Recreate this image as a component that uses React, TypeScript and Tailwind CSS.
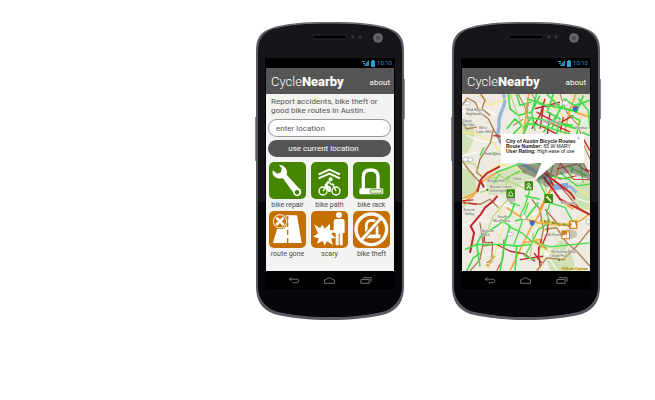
import type { ReactNode } from "react";

const FONT = "font-['Roboto','Liberation_Sans',sans-serif]";

type Road = { c: string; w: number; d: string };

const GREEN = "#43dc4b";
const RED = "#c0282c";
const BROWN = "#ad7d4e";
const ORANGE = "#f5a83c";
const YELLOW = "#f5e98c";
const OLIVE = "#a9d465";

// Minor streets first, then arterials, then rated bicycle routes.
const roads: Road[] = [
  { c: "#ffffff", w: 3, d: "M6 60L60 40L110 70M20 130L70 150L120 140M6 400L60 380L140 400L230 360M40 500L120 470L210 500L300 470M250 420L390 380M300 500L340 440L390 450M60 350L110 330L170 350M6 190L50 180M290 300L390 330M250 470L290 530" },
  { c: "#dcd6c8", w: 1.5, d: "M140 340L190 420M150 400L240 330M110 420L170 500M250 360L300 460M30 430L90 500M310 260L390 290M300 350L350 420M20 350L80 410M270 400L380 480M60 210L110 260M20 60L50 110" },
  { c: YELLOW, w: 4, d: "M55 6L90 40L125 25L170 6M6 120L50 125L100 150L120 180M60 250L120 215L190 235M80 534L105 480L130 400L120 340M230 440L270 480L330 500M240 534L250 480L225 430M330 230L350 290L390 310M380 60L350 90L390 120" },
  { c: YELLOW, w: 4, d: "M160 140L200 100L250 60L300 6M240 20L300 60L340 120M290 400L350 380L390 340M190 330L230 400L290 430" },
  { c: BROWN, w: 4, d: "M6 40L22 18L45 30L60 62L85 80L100 110L92 150L60 200L50 240L70 255M62 6L75 24L66 50L90 70M100 110L128 160M6 90L20 110L50 105M6 205L28 235L60 270" },
  { c: BROWN, w: 3, d: "M175 6L195 45L205 85L190 120M215 6L230 30L260 45L300 36M300 6L320 60L355 100L372 160L390 200M370 210L390 250M160 100L190 80" },
  { c: BROWN, w: 4, d: "M230 534L260 495L310 500L350 460L390 410M255 410L290 405L320 450L350 475L390 520M215 320L240 350L250 410L232 500M6 330L60 335L90 320L115 345M60 390L70 460L95 455M30 534L60 500L75 420" },
  { c: ORANGE, w: 5, d: "M348 6L330 50L318 100L312 170L290 250L262 310L235 370L215 400L190 450L150 534" },
  { c: ORANGE, w: 5, d: "M6 330L40 310L62 270L120 235M140 345L185 375L240 392L310 398L360 385L390 362M206 6L200 60L190 126M6 318L50 300M190 450L240 440M310 330L340 350M345 60L390 75" },
  { c: "#e8a23a", w: 6, d: "M275 290L255 320L238 355" },
  { c: RED, w: 6, d: "M120 222L80 243L62 262L52 298M60 262L72 285M250 255L275 285L300 320L390 366M345 320L330 300L250 240M30 480L42 420L32 400L62 365L75 345L100 325L112 310" },
  { c: RED, w: 4, d: "M110 455L150 475L190 482L225 505M180 500L250 490M245 438L235 470L240 520M222 480L245 510M100 130L122 132M10 330L50 335M265 380L262 420L245 460M6 325L40 322" },
  { c: RED, w: 4, d: "M215 110L240 70L255 20M230 60L295 95L340 70M250 45L240 110M220 90L290 125M270 60L262 126M310 75L300 120M255 85L330 120M225 50L300 30M370 140L390 175M280 280L250 215L240 240M375 230L390 236" },
  { c: "#c33a3a", w: 3, d: "M70 410L75 450L98 448L95 500L80 510M132 440L128 500L110 534M255 350L300 400M240 230L300 260L350 250M300 212L340 260L390 262M290 230L350 215L385 240M300 280L360 350" },
  { c: GREEN, w: 5, d: "M145 6L150 50L175 70L215 60L240 10M170 6L180 40L215 30M140 110L165 80L185 100L160 125M190 126L205 95L250 100M230 6L215 60L225 115M260 6L300 45L350 60L370 10M280 6L262 60L300 80L290 126" },
  { c: GREEN, w: 5, d: "M310 20L345 40L390 25M330 70L360 85L350 126M355 20L385 55L390 110M300 50L275 110M320 20L290 70L250 120M200 75L260 85L340 100M235 35L340 55M200 20L250 35M365 120L390 130M215 75L190 110M245 100L330 126M300 95L350 110" },
  { c: GREEN, w: 4, d: "M108 240L150 225L200 205L240 215M120 245L100 270L130 262L180 235M210 290L195 340L180 370M245 215L235 265L270 330L260 360M205 330L175 420L160 460M145 400L185 420L215 445L270 462L390 450" },
  { c: GREEN, w: 5, d: "M50 455L62 430L110 400L150 370L165 330M15 470L50 455L90 455L130 455L170 460L210 455M120 380L150 400L135 450L120 534M170 460L165 534M50 455L60 520M20 534L40 495L62 480M195 310L240 320M165 385L200 375L235 330" },
  { c: GREEN, w: 4, d: "M270 330L315 345L340 390M260 360L270 390L235 410L195 490L225 500M320 220L380 250M300 240L350 280L390 275M340 215L330 260M280 215L270 250L320 260M360 212L370 270M180 340L150 330M72 165L60 190M85 185L110 180" },
  { c: OLIVE, w: 3, d: "M90 260L120 250L165 275L200 290M60 300L95 290L130 300M150 6L190 110M240 212L260 300M80 420L100 370L160 300M130 300L150 250L200 235M6 345L30 325M220 420L210 500M16 210L45 215L55 240" },
];

const places: { x: number; y: number; t: string }[] = [
  { x: 18, y: 58, t: "Wild Basin" },
  { x: 18, y: 70, t: "Highlands" },
  { x: 8, y: 89, t: "Davis" },
  { x: 8, y: 101, t: "de Oak" },
  { x: 56, y: 109, t: "West" },
  { x: 48, y: 121, t: "Lake Hills" },
  { x: 73, y: 187, t: "Rollingwood" },
  { x: 82, y: 269, t: "Barton Hills" },
  { x: 90, y: 286, t: "Barton Creek" },
  { x: 90, y: 298, t: "Greenbelt" },
  { x: 160, y: 262, t: "Zilker" },
  { x: 112, y: 377, t: "South" },
  { x: 100, y: 389, t: "Manchaca" },
  { x: 10, y: 356, t: "Sunset" },
  { x: 14, y: 368, t: "Valley" },
  { x: 60, y: 418, t: "Garrison" },
  { x: 66, y: 430, t: "Park" },
  { x: 262, y: 431, t: "McKinney" },
  { x: 274, y: 480, t: "McKinney Falls" },
  { x: 274, y: 491, t: "State Park" },
  { x: 344, y: 111, t: "Windsor" },
  { x: 302, y: 334, t: "Riverside" },
  { x: 250, y: 93, t: "Hyde Park" },
];

const tagWrench = "M5 4l4 1 1 4 10 11-3 3L7 12l-4-1-1-4 3 2 2-2z";

function RouteMap() {
  return (
    <svg viewBox="6 6 384 528" className="block h-full w-full" preserveAspectRatio="none" aria-label="Map of Austin bicycle routes">
      <rect x="6" y="6" width="384" height="528" fill="#efebe2" />
      <g fill="#cfe0b4">
        <path d="M6 80L35 85L45 130L30 170L6 195Z" />
        <path d="M6 225L40 240L55 300L20 320L6 310Z" />
        <path d="M75 250L110 235L180 215L250 220L260 250L200 265L140 305L85 308Z" opacity=".8" />
        <path d="M320 300L350 270L390 265L390 350L350 350Z" />
        <path d="M275 470L300 440L325 455L345 520L330 534L270 534L262 505Z" />
        <path d="M328 6H390V40L350 45Z" opacity=".5" />
      </g>
      <path d="M130 6C145 40 115 60 117 90S105 120 122 150L160 200L250 250L290 285L330 282L350 300" fill="none" stroke="#92b8dc" strokeWidth="10" />
      <path d="M250 262L290 275L325 270L322 290L285 292Z" fill="#83abd3" />
      <g fill="none" strokeLinejoin="round">
        {roads.map((r, i) => (
          <path key={i} d={r.d} stroke={r.c} strokeWidth={r.w} />
        ))}
      </g>
      <path d="M170 218L250 212H371L390 250V262L330 240L240 262L225 255L190 242Z" fill="#3c3c30" opacity=".45" />
      <path d="M222 262L262 285L280 270L240 240Z" fill="#333333" opacity=".35" />
      <g fontFamily="'Liberation Sans', Arial, sans-serif" fontSize="11" fill="#54504a" stroke="#f6f3ec" strokeWidth="2" paintOrder="stroke">
        {places.map((p) => (
          <text key={p.x + "-" + p.y} x={p.x} y={p.y}>{p.t}</text>
        ))}
        <text x="240" y="388" transform="rotate(9 240 388)" fill="#6b5a12" stroke="#f5e36a" fontWeight="bold">E Ben White Blvd</text>
        <text x="84" y="522" transform="rotate(-55 84 522)" fill="#6b5a12" stroke="#f5e36a">S 1st St</text>
        <text x="306" y="531" fill="#6b5a12" stroke="#f5e36a">William Cannon</text>
        <text x="202" y="66" transform="rotate(-82 202 66)" fill="#6b5a12" stroke="#f5c36a">Burnet</text>
        <text x="222" y="448" transform="rotate(32 222 448)" fill="#6b5a12" stroke="#f5e36a">Stassney</text>
      </g>
      <g fill="#ffffff" stroke="#8a8a8a" strokeWidth="1.5">
        <ellipse cx="316" cy="33" rx="9" ry="7" />
        <ellipse cx="17" cy="201" rx="9" ry="6" />
        <ellipse cx="31" cy="202" rx="8" ry="6" />
        <ellipse cx="191" cy="373" rx="8" ry="7" />
        <ellipse cx="151" cy="424" rx="9" ry="6" />
        <ellipse cx="384" cy="387" rx="7" ry="7" />
        <ellipse cx="22" cy="34" rx="9" ry="5" />
      </g>
      <g fill="#2f6fc4">
        <path d="M338 42h15v8q-1 7-7 9q-7-2-8-9z" />
        <path d="M209 383h15v8q-1 7-7 9q-7-2-8-9z" />
      </g>
      <path d="M338 42h15v4h-15zM209 383h15v4h-15z" fill="#b45a6a" />
      <g fill="#5a6a4a">
        <circle cx="82" cy="292" r="3" />
        <circle cx="297" cy="501" r="3" />
      </g>
      <ellipse cx="154" cy="321" rx="13" ry="8" fill="#555555" opacity=".35" />
      <ellipse cx="330" cy="424" rx="22" ry="14" fill="#555555" opacity=".25" />
      <g fill="#3f8a0c">
        <rect x="194" y="266" width="25" height="27" rx="2" />
        <rect x="139" y="290" width="26" height="26" rx="2" />
        <rect x="253" y="304" width="26" height="27" rx="2" />
      </g>
      <g fill="none" stroke="#ffffff" strokeWidth="2.5">
        <path d="M199 277l7-5 7 5M206 276v6M202 281h8" />
        <circle cx="202" cy="286" r="2.5" />
        <circle cx="211" cy="286" r="2.5" />
        <path d="M147 308v-7q5-8 10 0v7M144 310h16" />
      </g>
      <path d={tagWrench} transform="translate(255 305)" fill="#ffffff" />
      <g fill="#d17c1c">
        <rect x="327" y="383" width="25" height="26" rx="2" />
        <rect x="304" y="413" width="26" height="26" rx="2" />
      </g>
      <g fill="#ffffff">
        <path d="M337 388h8l4 17h-18l4-10z" />
        <circle cx="334" cy="389" r="3" />
        <path d="M307 430l3-4 3 2 3-5 2 5 2-1v9h-13zM321 420h6v16h-6z" />
        <circle cx="324" cy="418" r="2.5" />
      </g>
      <path d="M248 205H294L221 267Z" fill="#ffffff" />
    </svg>
  );
}

function Shell() {
  return (
    <svg viewBox="0 0 150 298" preserveAspectRatio="none" className="absolute inset-0 h-full w-full" aria-hidden="true">
      <path d="M0 95h1v44h-1zM149 57h1v40h-1z" fill="#8a8a90" />
      <path d="M75 0C100 0 119 1 133 6C144 10 149 15 149 29L149 264C149 278 144 287 131 292C115 296 95 298 75 298C55 298 35 296 19 292C6 287 1 278 1 264L1 29C1 15 6 10 17 6C31 1 50 0 75 0Z" fill="#5a5a62" />
      <path d="M75 1C100 1 118 2 132 7C142 11 147 17 147 30L147 262C147 275 142 284 130 289C114 293 95 295 75 295C55 295 36 293 20 289C8 284 3 275 3 262L3 30C3 17 8 11 18 7C32 2 50 1 75 1Z" fill="#15151a" />
      <path d="M3 180V262C3 275 8 284 20 289C36 293 55 295 75 295C95 295 114 293 130 289C142 284 147 275 147 262V180Z" fill="#07070b" />
      <path d="M20 6C35 2 52 1 75 1S115 2 130 6" fill="none" stroke="#77777d" strokeWidth="1" />
      <rect x="57" y="13" width="35" height="4" rx="2" fill="#020203" stroke="#3a3a40" strokeWidth=".6" />
      <circle cx="98" cy="15" r="1.7" fill="#34343b" />
      <circle cx="105" cy="15" r="1.7" fill="#34343b" />
      <circle cx="123" cy="16" r="4.8" fill="#65656b" />
      <circle cx="123" cy="16" r="2.2" fill="#4c4c52" />
    </svg>
  );
}

function Phone({ children }: { children: ReactNode }) {
  return (
    <section className="relative w-[150px] shrink-0 px-2.5 pt-9 pb-[31px]">
      <Shell />
      <div className="relative bg-black px-px">
        <div className="flex h-2.5 items-center justify-end gap-0.5 pr-0.5 text-[6px] leading-[10px] text-[#2f9fc8]">
          <svg viewBox="0 0 13 7" className="h-[7px] w-[13px]" aria-hidden="true">
            <path d="M0 1h3v1H0zM1 3h2v1H1z" fill="#2f9fc8" />
            <path d="M7 0V6H2V5L4 4V3z" fill="#2688ae" />
            <path d="M10 0h2v1h1v6H9V1h1z" fill="#2f9fc8" />
          </svg>
          <span>10:10</span>
        </div>
        <header className="flex h-[26px] items-center justify-between bg-[#555555] pr-1 pl-[5px] text-white">
          <h1 className="pt-0.5 text-[13px] leading-4 font-light">
            Cycle<b className="font-extrabold">Nearby</b>
          </h1>
          <a href="#about" className="pt-1 text-[8px] leading-3">about</a>
        </header>
        {children}
        <nav className="flex h-[18px] items-center justify-around px-2.5">
          <button aria-label="Back">
            <svg viewBox="0 0 36 22" className="h-[7px] w-3" fill="none" stroke="#77777c" strokeWidth="3">
              <path d="M10 2L3 7l7 5M3 7h25q5 0 5 5t-5 6H14" />
            </svg>
          </button>
          <button aria-label="Home">
            <svg viewBox="0 0 39 22" className="h-[7px] w-[13px]" fill="none" stroke="#77777c" strokeWidth="3">
              <path d="M4 20V11H2L19 2L37 11H35V20Z" />
            </svg>
          </button>
          <button aria-label="Recent apps">
            <svg viewBox="0 0 36 22" className="h-[7px] w-3" fill="none" stroke="#77777c" strokeWidth="3">
              <path d="M2 8H28V20H2ZM8 2H34V15" />
            </svg>
          </button>
        </nav>
      </div>
    </section>
  );
}

function Tile({ label, color, children }: { label: string; color: string; children: ReactNode }) {
  return (
    <button className="flex flex-col items-center">
      <svg viewBox="0 0 111 111" className={"block aspect-square w-full rounded-[5px] " + color} aria-hidden="true">
        {children}
      </svg>
      <span className="text-[7px] leading-3 whitespace-nowrap text-[#4a4a4a]">{label}</span>
    </button>
  );
}

export default function App() {
  return (
    <main className={"flex min-h-screen items-start justify-end gap-[46px] bg-white pt-[22px] pr-[54px] " + FONT}>
      <Phone>
        <div className="h-[177px] bg-[#f3f3f2] px-0.5 pt-[3px]">
          <p className="px-[3px] text-[8px] leading-[9px] whitespace-nowrap text-[#555555]">
            Report accidents, bike theft or
            <br />
            good bike routes in Austin.
          </p>
          <form className="mt-1 flex flex-col gap-[3px]">
            <input
              aria-label="enter location"
              placeholder="enter location"
              className="h-[18px] w-[123px] rounded-full border border-[#999999] bg-white px-[7px] text-[8px] text-[#555555] placeholder:text-[#555555]"
            />
            <button type="button" className="h-[17px] w-[123px] rounded-full bg-[#555555] pr-3 text-[8px] text-white">
              use current location
            </button>
          </form>
          <div className="mt-[5px] grid grid-cols-3 gap-x-[5px] pr-0.5 pl-px">
            <Tile label="bike repair" color="bg-[#458500]">
              <path fill="#ffffff" fillRule="evenodd" d="M30 9C42 8 53 17 54 30L53 38L89 78C98 82 100 94 92 100C84 106 73 101 72 91L41 48C30 53 14 46 11 35L11 25L25 35L36 31L38 19ZM84 84A7 7 0 1 0 84.1 84Z" />
            </Tile>
            <Tile label="bike path" color="bg-[#458500]">
              <g fill="none" stroke="#ffffff" strokeWidth="6">
                <path d="M23 37L55 23L87 37M23 49L55 35L87 49" />
                <g strokeWidth="4">
                  <circle cx="36" cy="87" r="12" />
                  <circle cx="75" cy="87" r="12" />
                  <path d="M36 87L46 73L54 88M64 65L75 87" />
                </g>
                <path d="M54 58L44 70L57 77L55 90" strokeWidth="7" strokeLinejoin="round" />
                <path d="M54 59L60 67H70" strokeWidth="4" />
              </g>
              <circle cx="59" cy="52" r="6" fill="#ffffff" />
            </Tile>
            <Tile label="bike rack" color="bg-[#458500]">
              <path d="M31 82V44Q31 24 53 24T75 44V82" fill="none" stroke="#ffffff" strokeWidth="10" />
              <rect x="19" y="79" width="72" height="18" rx="5" fill="#ffffff" />
              <rect x="52" y="82" width="35" height="12" rx="3" fill="#dde8cf" stroke="#458500" strokeWidth="2" />
            </Tile>
            <Tile label="route gone" color="bg-[#c46f00]">
              <path d="M42 13H84L98 96H12L25 50Z" fill="#ffffff" />
              <path d="M56 15V26M56 35V48M56 56V72M56 82V96" stroke="#c46f00" strokeWidth="4" />
              <circle cx="33" cy="31" r="24" fill="#c46f00" />
              <circle cx="33" cy="31" r="20" fill="none" stroke="#ffffff" strokeWidth="3" />
              <path d="M22 20L44 42M44 20L22 42" stroke="#ffffff" strokeWidth="8" />
            </Tile>
            <Tile label="scary" color="bg-[#c46f00]">
              <g fill="#ffffff">
                <path d="M9 40L27 52L34 41L41 53L57 38L57 57L72 58L61 70L75 82L60 82L66 102L48 91L41 103L34 90L18 98L23 82L7 77L21 67Z" />
                <circle cx="84" cy="12" r="9" />
                <path d="M75 24H94Q101 24 101 34V66H95V103H86V68H83V103H74V66H68V34Q68 24 75 24Z" />
              </g>
            </Tile>
            <Tile label="bike theft" color="bg-[#c46f00]">
              <g fill="none" stroke="#ffffff">
                <path d="M40 72V45Q40 28 56 28T72 45V72" strokeWidth="8" />
                <path d="M32 76H82" strokeWidth="11" />
                <path d="M84 22L26 86" stroke="#c46f00" strokeWidth="15" />
                <path d="M84 22L26 86" strokeWidth="9" />
                <circle cx="55" cy="55" r="46" strokeWidth="10" />
              </g>
            </Tile>
          </div>
        </div>
      </Phone>
      <Phone>
        <div className="relative h-[177px] bg-[#efebe2]">
          <RouteMap />
          <div className="absolute top-10 left-[39px] h-[29px] w-[83px] bg-white pt-[5px] pl-[5px] font-['Liberation_Sans',Arial,sans-serif] text-[5px] leading-[5px] whitespace-nowrap text-[#111111]">
            <p className="font-bold">City of Austin Bicycle Routes</p>
            <p><b>Route Number:</b> 65 W MARY</p>
            <p><b>User Rating:</b> High ease of use</p>
            <button aria-label="Close" className="absolute top-0.5 right-1 text-[5px] leading-[5px] text-[#888888]">×</button>
          </div>
        </div>
      </Phone>
    </main>
  );
}
